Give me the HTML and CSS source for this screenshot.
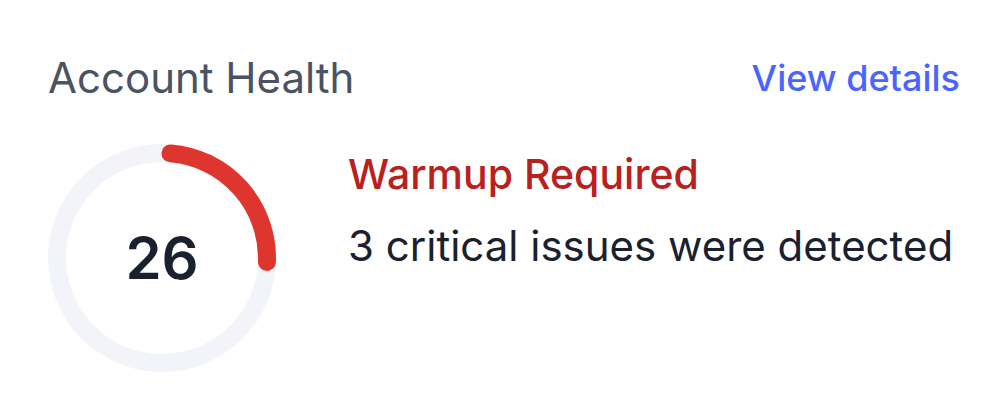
FILE: index.html
```html
<!DOCTYPE html>
<html lang="en">
<head>
<meta charset="utf-8">
<meta name="viewport" content="width=device-width, initial-scale=1">
<title>Account Health</title>
<link rel="stylesheet" href="styles.css">
</head>
<body>
<main class="card">
  <header class="card-header">
    <h1 class="card-title">Account Health</h1>
    <a class="details-link" href="#details">View details</a>
  </header>
  <div class="card-body">
    <div class="gauge">
      <svg class="gauge-ring" viewBox="0 0 228 228" aria-hidden="true">
        <circle class="gauge-track" cx="114" cy="114" r="105"/>
        <path class="gauge-value" d="M122.5 9.4 A105 105 0 0 1 218.9 118"/>
      </svg>
      <span class="gauge-score">26</span>
    </div>
    <div class="summary">
      <h2 class="status">Warmup Required</h2>
      <p class="message">3 critical issues were detected</p>
    </div>
  </div>
</main>
</body>
</html>
```
FILE: styles.css
```css
* {
  box-sizing: border-box;
}

body {
  margin: 0;
  background: #fff;
  font-family: Inter, "Liberation Sans", sans-serif;
}

.card {
  padding: 48px;
}

.card-header {
  display: flex;
  align-items: center;
  justify-content: space-between;
  margin-bottom: 36px;
}

.card-title {
  margin: 0;
  color: #4b5263;
  font-size: 42px;
  font-weight: 400;
  line-height: 60px;
}

.details-link {
  color: #4a65ff;
  font-size: 36px;
  font-weight: 500;
  line-height: 56px;
  text-decoration: none;
}

.card-body {
  display: flex;
  gap: 72px;
}

.gauge {
  display: grid;
  flex: none;
  place-items: center;
}

.gauge-ring,
.gauge-score {
  grid-area: 1 / 1;
}

.gauge-ring {
  width: 228px;
}

.gauge-track,
.gauge-value {
  fill: none;
  stroke-width: 18;
}

.gauge-track {
  stroke: #f3f4fa;
}

.gauge-value {
  stroke: #df352f;
  stroke-linecap: round;
}

.gauge-score {
  color: #1b202e;
  font-size: 58px;
  font-weight: 600;
  line-height: 64px;
}

.summary {
  white-space: nowrap;
}

.status,
.message {
  margin: 0;
  line-height: 60px;
}

.status {
  margin-bottom: 12px;
  color: #b9201e;
  font-size: 41px;
  font-weight: 500;
}

.message {
  color: #1b202e;
  font-size: 42px;
}
```
